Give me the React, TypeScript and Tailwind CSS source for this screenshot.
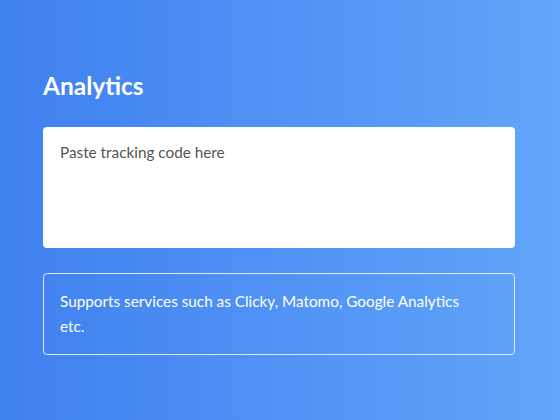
export default function App() {
  return (
    <div className="min-h-[420px] w-full bg-gradient-to-r from-[#3f80ef] to-[#62a5fa] pl-[43px] pr-[45px] pt-[71px] font-['Lato','Noto_Sans',sans-serif]">
      <h2 className="text-[24.5px] font-bold leading-[30px] text-white">Analytics</h2>
      <textarea
        className="mt-[26px] block h-[121px] w-full resize-none rounded-[4px] bg-white px-[17px] py-[14px] text-[15.3px] leading-[22px] text-gray-700 placeholder:text-[#555] outline-none"
        placeholder="Paste tracking code here"
      />
      <div className="mt-[25px] rounded-[4px] border border-white/80 pl-[16px] pr-[40px] py-[15px] text-[15.3px] leading-[25px] text-white">
        Supports services such as Clicky, Matomo, Google Analytics etc.
      </div>
    </div>
  );
}
